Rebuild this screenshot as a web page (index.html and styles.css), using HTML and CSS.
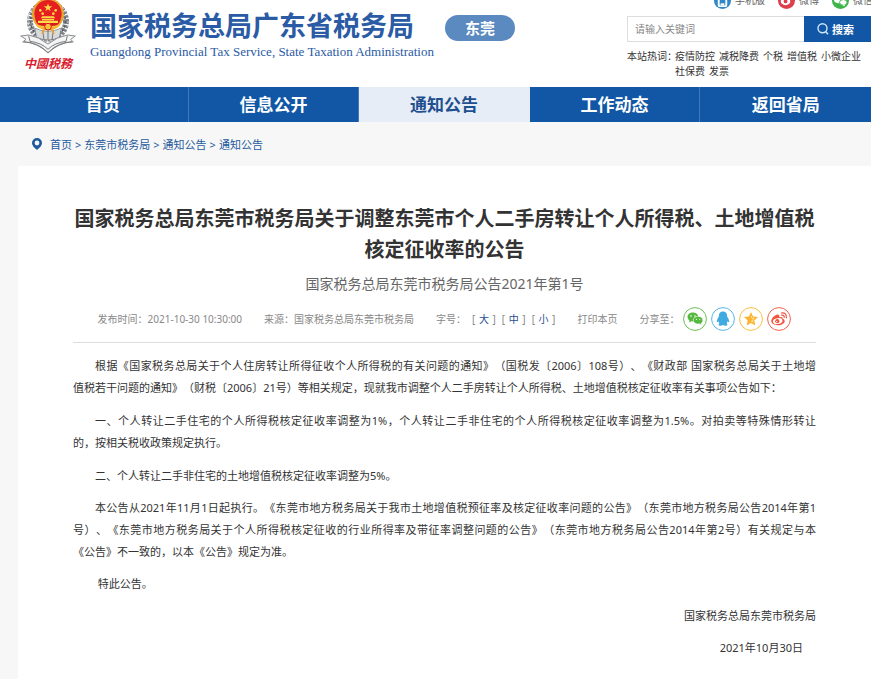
FILE: index.html
```html
<!DOCTYPE html>
<html lang="zh-CN">
<head>
<meta charset="utf-8">
<meta name="viewport" content="width=device-width, initial-scale=1">
<title>国家税务总局广东省税务局</title>
<link rel="stylesheet" href="styles.css">
</head>
<body>
<header class="header">
  <div class="emblem">
    <svg class="emblem-art" viewBox="30 0 168 162" aria-hidden="true">
      <circle cx="114" cy="64" r="54" fill="none" stroke="#7d8288" stroke-width="18" stroke-dasharray="8 3"/>
      <circle cx="114" cy="64" r="60" fill="none" stroke="#e4e5e6" stroke-width="3" stroke-dasharray="5 6"/>
      <circle cx="114" cy="64" r="52" fill="none" stroke="#4e555c" stroke-width="4" stroke-dasharray="6 7"/>
      <path d="M50-4H178V20Q160 6 114 2Q68 6 50 20Z" fill="#fff"/>
      <path d="M74 84Q112 104 154 84L148 112Q114 128 80 112Z" fill="#d9dadb" stroke="#777" stroke-width="2"/>
      <path d="M114 88V120M98 92L102 119M130 92L126 119" stroke="#777" stroke-width="3"/>
      <path d="M32 108L56 105Q86 110 114 132Q142 110 172 105L196 108L182 118L190 126Q146 124 114 158Q82 124 38 126L48 118Z" fill="#f5f5f5" stroke="#8b8e91" stroke-width="3"/>
      <path d="M56 107L60 124Q94 128 114 148Q134 128 168 124L172 107M42 125Q86 130 114 159Q142 130 186 125" fill="none" stroke="#777b7e" stroke-width="3"/>
      <circle cx="114" cy="43" r="48" fill="#e5a62f"/>
      <circle cx="114" cy="41" r="41" fill="#e51e20"/>
      <path d="M76 58Q114 70 152 58Q146 83 114 87Q82 83 76 58Z" fill="#d71920"/>
      <path d="M114 10L117 19H127L119 25L122 34L114 28L106 34L109 25L101 19H111Z" fill="#ffd94a"/>
      <g fill="#ffd94a"><circle cx="91" cy="31" r="4"/><circle cx="98" cy="41" r="4"/><circle cx="130" cy="41" r="4"/><circle cx="137" cy="31" r="4"/>
      <path d="M92 55L97 49H131L136 55ZM96 57H132V61H96ZM84 62H144V69H84Z"/></g>
      <path d="M77 73Q114 85 151 73L145 82Q114 92 83 82Z" fill="#f5bc35"/>
      <circle cx="114" cy="80" r="10" fill="#f7c43d" stroke="#d71920" stroke-width="3"/>
      <path d="M102 90L96 101M126 90L132 101" stroke="#e5a62f" stroke-width="5"/>
    </svg>
    <span class="emblem-text">中國税務</span>
  </div>
  <div class="brand">
    <div class="brand-cn">国家税务总局广东省税务局</div>
    <div class="brand-en">Guangdong Provincial Tax Service, State Taxation Administration</div>
  </div>
  <span class="city">东莞</span>
  <div class="tools">
    <div class="top-links">
      <a href="#"><svg viewBox="0 0 18 18"><circle cx="9" cy="9" r="9" fill="#2f86c8"/><rect x="5" y="3" width="8" height="12" rx="1" fill="none" stroke="#fff" stroke-width="2"/><path d="M7 13H11" stroke="#fff" stroke-width="2"/></svg>手机版</a>
      <a href="#"><svg viewBox="0 0 18 18"><circle cx="9" cy="9" r="9" fill="#dd3f4d"/><ellipse cx="8" cy="10" rx="5" ry="4" fill="#fff"/><circle cx="8" cy="10" r="2" fill="#dd3f4d"/><path d="M10 4Q14 4 14 8" fill="none" stroke="#fff" stroke-width="1"/></svg>微博</a>
      <a href="#"><svg viewBox="0 0 18 18"><circle cx="9" cy="9" r="9" fill="#3db54a"/><ellipse cx="7" cy="8" rx="5" ry="4" fill="#fff"/><ellipse cx="12" cy="11" rx="4" ry="3" fill="#fff" stroke="#3db54a"/><path d="M13 13L14 15L11 14" fill="#fff"/></svg>微信</a>
    </div>
    <form class="search">
      <input type="text" placeholder="请输入关键词" aria-label="请输入关键词">
      <button type="button"><svg viewBox="0 0 12 12" aria-hidden="true"><circle cx="5.5" cy="5.3" r="4.5" fill="none" stroke="#cfe6fa" stroke-width="1.4"/><path d="M8.5 8.5L11 11.3" stroke="#cfe6fa" stroke-width="1.6"/></svg>搜索</button>
    </form>
    <div class="hot">
      <span>本站热词：</span>
      <div class="hot-words"><a href="#">疫情防控</a><a href="#">减税降费</a><a href="#">个税</a><a href="#">增值税</a><a href="#">小微企业</a><a href="#">社保费</a><a href="#">发票</a></div>
    </div>
  </div>
</header>
<nav class="nav">
  <a href="#">首页</a><a href="#">信息公开</a><a href="#" class="active">通知公告</a><a href="#">工作动态</a><a href="#">返回省局</a>
</nav>
<div class="crumbs">
  <svg viewBox="0 0 10 12" aria-hidden="true"><path fill-rule="evenodd" d="M5 0A5 5 0 0 1 10 5C10 8 7 10 5 12C3 10 0 8 0 5A5 5 0 0 1 5 0ZM5 2.6A2.4 2.4 0 1 0 5 7.4A2.4 2.4 0 1 0 5 2.6Z" fill="#1f5a9e"/></svg>
  <a href="#">首页</a><span>&gt;</span><a href="#">东莞市税务局</a><span>&gt;</span><a href="#">通知公告</a><span>&gt;</span><a href="#">通知公告</a>
</div>
<main class="article">
  <h1>国家税务总局东莞市税务局关于调整东莞市个人二手房转让个人所得税、土地增值税<br>核定征收率的公告</h1>
  <p class="subtitle">国家税务总局东莞市税务局公告2021年第1号</p>
  <div class="meta">
    <span>发布时间：2021-10-30 10:30:00</span>
    <span>来源：国家税务总局东莞市税务局</span>
    <span class="sizes">字号：<span>[ <a href="#">大</a> ]</span><span>[ <a href="#">中</a> ]</span><span>[ <a href="#">小</a> ]</span></span>
    <a href="#" class="print">打印本页</a>
    <span class="share">分享至：
      <a href="#" aria-label="微信"><svg viewBox="0 0 24 24"><circle cx="12" cy="12" r="11.4" fill="#fff" stroke="#6cbd54" stroke-width="1"/><path d="M10 5.5C6.800 5.500 4.500 7.500 4.500 10Q4.500 12.200 6.500 13.600L6 15.500L8.400 14.300Q10 14.700 11 14.400C15 14 15.800 11.500 15.400 9.500C14.900 7 12.600 5.500 10 5.500Z" fill="#56b93f"/><path d="M15 9.300C12.300 9.300 10.300 11 10.300 13.200S12.300 17.100 15 17.100L16.800 16.900L18.800 18L18.300 16.200Q19.900 15 19.900 13.200C19.900 11 17.700 9.300 15 9.300Z" fill="#56b93f" stroke="#fff" stroke-width=".6"/><g fill="#fff"><circle cx="8" cy="9" r=".8"/><circle cx="12" cy="9" r=".8"/><circle cx="13.500" cy="12.300" r=".6"/><circle cx="16.700" cy="12.300" r=".6"/></g></svg></a>
      <a href="#" aria-label="QQ"><svg viewBox="0 0 24 24"><circle cx="12" cy="12" r="11.4" fill="#fff" stroke="#56b6e7" stroke-width="1"/><path d="M12 4.500C9 4.500 7.700 6.800 7.900 9.500Q6 12 5.700 14.500Q5.800 16 7.300 14.300L8.300 16.200Q6.500 18.600 9 18.800Q11 18.900 12 18Q13 18.900 15 18.800Q17.500 18.600 15.700 16.200L16.700 14.300Q18.200 16 18.300 14.500Q18 12 16.100 9.500C16.300 6.800 15 4.500 12 4.500Z" fill="#40abe0"/></svg></a>
      <a href="#" aria-label="收藏"><svg viewBox="0 0 24 24"><circle cx="12" cy="12" r="11.4" fill="#fff" stroke="#fdbe3d" stroke-width="1"/><path d="M12 5L14.100 9.600L19 10.100L15.300 13.500L16.300 18.400L12 15.900L7.700 18.400L8.700 13.500L5 10.100L9.900 9.600Z" fill="#fdb52f"/><path d="M12 9L13 11.200L15.200 11.500L13.500 13L14 15L12 14" fill="none" stroke="#ffe1a3"/></svg></a>
      <a href="#" aria-label="微博"><svg viewBox="0 0 24 24"><circle cx="12" cy="12" r="11.4" fill="#fff" stroke="#f4614d" stroke-width="1"/><path d="M10.500 7.400C8 7.500 4.300 11.300 4.300 14C4.300 16.500 7.400 18.200 10.900 18.200C14.600 18.200 17.700 16.200 17.700 13.900Q17.700 12.300 15.600 11.800Q16.200 9.500 12.300 10.300Q12.800 7.500 10.500 7.400Z" fill="#f1543f"/><ellipse cx="10.700" cy="14.100" rx="4.800" ry="2.900" fill="#fff" transform="rotate(-8 10.700 14.100)"/><circle cx="10.300" cy="14.200" r="2.100" fill="#f1543f"/><circle cx="9.700" cy="14.600" r=".7" fill="#fff"/><path d="M14.300 6Q19.500 5 19.400 10.700M14.600 8.200Q17.300 7.700 17.200 10.400" fill="none" stroke="#f1543f" stroke-width="1.200" stroke-linecap="round"/></svg></a>
    </span>
  </div>
  <div class="body">
    <p><span class="full">根据《国家税务总局关于个人住房转让所得征收个人所得税的有关问题的通知》（国税发〔2006〕108号）、《财政部 国家税务总局关于土地增</span><span class="rest">值税若干问题的通知》（财税〔2006〕21号）等相关规定，现就我市调整个人二手房转让个人所得税、土地增值税核定征收率有关事项公告如下：</span></p>
    <p><span class="full">一、个人转让二手住宅的个人所得税核定征收率调整为1%，个人转让二手非住宅的个人所得税核定征收率调整为1.5%。对拍卖等特殊情形转让</span><span class="rest">的，按相关税收政策规定执行。</span></p>
    <p>二、个人转让二手非住宅的土地增值税核定征收率调整为5%。</p>
    <p><span class="full">本公告从2021年11月1日起执行。《东莞市地方税务局关于我市土地增值税预征率及核定征收率问题的公告》（东莞市地方税务局公告2014年第1</span><span class="full rest">号）、《东莞市地方税务局关于个人所得税核定征收的行业所得率及带征率调整问题的公告》（东莞市地方税务局公告2014年第2号）有关规定与本</span><span class="rest">《公告》不一致的，以本《公告》规定为准。</span></p>
    <p>&nbsp;特此公告。</p>
    <p class="sign">国家税务总局东莞市税务局</p>
    <p class="sign date">2021年10月30日</p>
  </div>
</main>
</body>
</html>
```
FILE: styles.css
```css
* {
  box-sizing: border-box;
}

html {
  background: #f7f7f7;
}

body {
  margin: 0;
  min-height: 100vh;
  display: flex;
  flex-direction: column;
  overflow-x: hidden;
  font-family: "Noto Sans", "Noto Sans CJK SC", sans-serif;
  font-size: 11px;
  color: #333;
  text-spacing-trim: space-all;
}

a {
  color: inherit;
  text-decoration: none;
}

svg {
  display: block;
  flex: none;
}

.header {
  display: flex;
  align-items: flex-start;
  height: 87px;
  padding-left: 20px;
  background: #fff;
  overflow: hidden;
}

.emblem {
  width: 56px;
  flex: none;
}

.emblem-art {
  width: 56px;
  height: 54px;
}

.emblem-text {
  display: block;
  text-align: center;
  font-family: "Noto Sans CJK SC", sans-serif;
  font-size: 12px;
  line-height: 18px;
  font-style: italic;
  font-weight: 700;
  color: #d9202c;
}

.brand {
  flex: none;
  margin-left: 14px;
  padding-top: 8px;
  color: #2a5ba4;
  white-space: nowrap;
}

.brand-cn {
  font-size: 27px;
  line-height: 36px;
  font-weight: 700;
}

.brand-en {
  font-family: "Liberation Serif", serif;
  font-size: 13px;
  line-height: 16px;
}

.city {
  flex: none;
  width: 70px;
  margin: 15px 0 0 auto;
  border-radius: 13px;
  background: #5a8abf;
  color: #fff;
  text-align: center;
  font-size: 15px;
  line-height: 26px;
  font-weight: 700;
}

.tools {
  flex: none;
  width: 244px;
  margin-left: 112px;
}

.top-links {
  display: flex;
  gap: 13px;
  margin-top: -8px;
  padding-left: 87px;
  height: 18px;
  font-size: 10px;
  line-height: 16px;
  color: #666;
  white-space: nowrap;
}

.top-links a {
  display: flex;
  gap: 4px;
}

.top-links svg {
  width: 17px;
  height: 17px;
}

.search {
  display: flex;
  height: 26px;
  margin-top: 6px;
}

.search input {
  flex: 1;
  min-width: 0;
  padding: 0 7px;
  border: 1px solid #ddd;
  border-right: 0;
  border-radius: 0;
  font: inherit;
  font-size: 10px;
}

.search input::placeholder {
  color: #888;
}

.search button {
  display: flex;
  align-items: center;
  gap: 3px;
  width: 67px;
  padding: 0 0 0 13px;
  border: 0;
  background: #1157a5;
  color: #fff;
  font: inherit;
  font-weight: 700;
}

.search button svg {
  width: 12px;
  height: 12px;
}

.hot {
  display: flex;
  margin-top: 7px;
  font-size: 10px;
  line-height: 15px;
}

.hot > span {
  flex: none;
  width: 48px;
  white-space: nowrap;
}

.hot-words {
  display: flex;
  flex-wrap: wrap;
  column-gap: 4px;
}

.nav {
  display: grid;
  grid-template-columns: repeat(5, 1fr);
  padding-left: 18px;
  background: #1157a5;
}

.nav a {
  border-right: 1px solid #3f79b8;
  color: #fff;
  text-align: center;
  font-size: 17px;
  line-height: 35px;
  font-weight: 700;
}

.nav a:last-child {
  border-right: 0;
}

.nav .active {
  border-color: #e6edf6;
  background: #e6edf6;
  color: #1f4f8f;
}

.crumbs {
  display: flex;
  align-items: center;
  gap: 3px;
  height: 44px;
  padding-left: 32px;
  color: #1f5a9e;
}

.crumbs svg {
  width: 10px;
  height: 12px;
  margin-right: 5px;
}

.article {
  flex: 1;
  margin-left: 18px;
  padding: 37px 55px 0;
  background: #fff;
}

h1 {
  margin: 0;
  text-align: center;
  font-size: 20px;
  line-height: 31px;
  font-weight: 700;
  white-space: nowrap;
}

.subtitle {
  margin: 8px 0 0;
  text-align: center;
  font-size: 14px;
  line-height: 22px;
  color: #666;
}

.meta {
  display: flex;
  justify-content: center;
  align-items: center;
  gap: 22px;
  height: 48px;
  border-bottom: 1px solid #ddd;
  font-size: 10px;
  color: #888;
  white-space: nowrap;
}

.sizes,
.share {
  display: flex;
  align-items: center;
}

.sizes {
  gap: 6px;
}

.sizes a {
  margin: 0 1px;
  color: #1f4f8f;
}

.share {
  gap: 4px;
}

.share svg {
  width: 24px;
  height: 24px;
}

.body {
  padding-top: 12px;
  line-height: 22px;
}

.body p {
  margin: 0 0 10px;
  text-indent: 22px;
}

.body p:nth-child(-n+2) {
  margin-bottom: 11px;
}

.full,
.rest {
  display: block;
  white-space: nowrap;
}

.full {
  text-align: justify;
  text-align-last: justify;
}

.rest {
  text-indent: 0;
}

.body .sign {
  text-align: right;
}

.date {
  padding-right: 13px;
}
```
